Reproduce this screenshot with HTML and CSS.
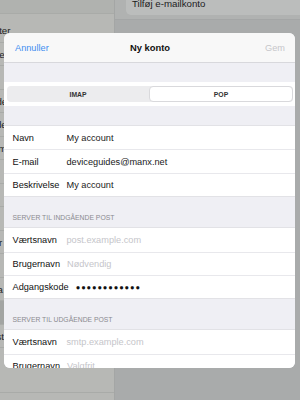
FILE: index.html
```html
<!DOCTYPE html>
<html lang="da">
<head>
<meta charset="utf-8">
<title>Ny konto</title>
<link rel="stylesheet" href="styles.css">
</head>
<body>
<div class="backdrop">
  <aside class="sidebar">
    <div class="side-top"></div>
    <ul class="side-list">
      <li>Kontakter</li>
      <li>Kalender</li>
      <li>Noter</li>
      <li>Påmindelser</li>
      <li>Beskeder</li>
      <li>FaceTime</li>
      <li>Kort</li>
      <li>Safari</li>
      <li>Musik</li>
      <li>Videoer</li>
      <li>Fotos</li>
      <li>Kamera</li>
      <li class="selected">iBooks</li>
      <li>Podcasts</li>
    </ul>
    <ul class="side-list next-group">
      <li>Twitter</li>
    </ul>
  </aside>
  <main class="detail">
    <div class="detail-top">
      <div class="top-card">Tilføj e-mailkonto</div>
    </div>
  </main>
</div>

<section class="sheet">
  <header class="sheet-bar">
    <span class="bar-btn cancel">Annuller</span>
    <span class="bar-title">Ny konto</span>
    <span class="bar-btn save">Gem</span>
  </header>
  <div class="gap-top"></div>
  <div class="seg-cell">
    <div class="segmented">
      <span class="seg">IMAP</span>
      <span class="seg active">POP</span>
    </div>
  </div>
  <div class="gap-mid"></div>
  <div class="group">
    <div class="row"><span class="label">Navn</span><span class="value">My account</span></div>
    <div class="row"><span class="label">E-mail</span><span class="value">deviceguides@manx.net</span></div>
    <div class="row"><span class="label">Beskrivelse</span><span class="value">My account</span></div>
  </div>
  <div class="section-head">Server til indgående post</div>
  <div class="group">
    <div class="row"><span class="label">Værtsnavn</span><span class="value placeholder">post.example.com</span></div>
    <div class="row"><span class="label">Brugernavn</span><span class="value placeholder">Nødvendig</span></div>
    <div class="row"><span class="label">Adgangskode</span><span class="value dots">●●●●●●●●●●●●</span></div>
  </div>
  <div class="section-head">Server til udgående post</div>
  <div class="group">
    <div class="row"><span class="label">Værtsnavn</span><span class="value placeholder">smtp.example.com</span></div>
    <div class="row"><span class="label">Brugernavn</span><span class="value placeholder">Valgfrit</span></div>
  </div>
</section>
</body>
</html>
```

FILE: styles.css
```css
* { box-sizing: border-box; }
html, body {
  margin: 0;
  padding: 0;
  width: 300px;
  height: 400px;
  overflow: hidden;
  font-family: "Liberation Sans", Arial, sans-serif;
  position: relative;
}

.backdrop {
  display: flex;
  height: 400px;
}

.sidebar {
  width: 115px;
  flex: 0 0 115px;
  background: #b7b8b5;
  border-right: 1px solid #a4a6a5;
  overflow: hidden;
}
.side-top {
  height: 14px;
  border-bottom: 1px solid #a9aba8;
  background: #b0b2af;
}
.side-list {
  list-style: none;
  margin: 0 0 0 -31px;
  padding: 5px 0 0 0;
}
.side-list.next-group {
  margin-top: 44px;
  padding-top: 0;
  border-top: 1px solid #a9aba8;
}
.side-list li {
  height: 23.5px;
  line-height: 23px;
  font-size: 9.7px;
  color: #1e1e1e;
  border-bottom: 1px solid #a9aba8;
  white-space: nowrap;
}
.side-list li.selected {
  background: #a2a4a2;
}

.detail {
  flex: 1;
  background: #a9abab;
}
.detail-top {
  height: 20px;
  background: #b0b2b1;
  border-bottom: 1px solid #a4a6a6;
  padding-left: 11px;
}
.top-card {
  height: 15px;
  background: #bbbdbc;
  border-radius: 0 0 0 5px;
  font-size: 9.7px;
  color: #1c1c1c;
  padding-left: 6px;
  line-height: 8px;
}

/* modal sheet */
.sheet {
  position: absolute;
  left: 4px;
  top: 33px;
  width: 291px;
  height: 335px;
  border-radius: 6px;
  overflow: hidden;
  background: #efeff4;
  font-size: 9.2px;
  color: #111;
}
.sheet-bar {
  height: 30px;
  background: #f8f8f8;
  border-bottom: 1px solid #d8d8dc;
  display: flex;
  align-items: center;
  justify-content: space-between;
  padding: 0 10px 0 11px;
}
.bar-btn { width: 40px; }
.cancel { color: #3f8ef0; }
.save { color: #c6c6ca; text-align: right; }
.bar-title { font-weight: bold; color: #111; font-size: 9.4px; }

.gap-top { height: 19px; }
.seg-cell {
  background: #fff;
  height: 24px;
  padding: 4px 2px 0 3px;
}
.segmented {
  display: flex;
  height: 16px;
  background: #ececee;
  border-radius: 4px;
}
.seg {
  flex: 1;
  display: flex;
  align-items: center;
  justify-content: center;
  font-size: 6.8px;
  font-weight: bold;
  color: #333;
  border-radius: 4px;
}
.seg.active {
  background: #fff;
  border: 1px solid #d9d9dc;
}
.gap-mid { height: 19px; }

.group {
  background: #fff;
  border-top: 1px solid #e2e2e6;
  border-bottom: 1px solid #e2e2e6;
}
.row {
  height: 23.4px;
  display: flex;
  align-items: center;
  padding-left: 8.5px;
}
.row + .row {
  border-top: 1px solid #e8e8ec;
}
.label {
  min-width: 47px;
  margin-right: 7px;
  color: #111;
}
.value { color: #1a1a1a; }
.placeholder { color: #c5c5ca; }
.dots {
  font-size: 7.5px;
  letter-spacing: 0.9px;
  color: #111;
}

.section-head {
  height: 30px;
  display: flex;
  align-items: flex-end;
  padding: 0 0 6px 8.5px;
  font-size: 6.8px;
  text-transform: uppercase;
  color: #8a8a8f;
}
```
